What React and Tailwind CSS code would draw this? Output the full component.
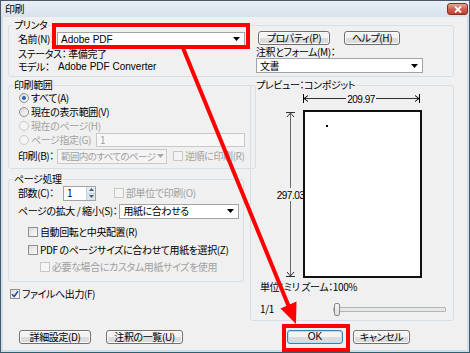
import React from 'react';

// small win7-ish controls
function Btn({ className = '', children, def }) {
  return (
    <div
      className={`h-[14px] flex items-center justify-center rounded-[3px] border bg-linear-to-b from-[#f3f3f3] from-50% to-[#dcdcdc] to-50% ${
        def ? 'border-[#3c7fb1] shadow-[inset_0_0_0_1px_#a8e2fb]' : 'border-[#707070] shadow-[inset_0_0_0_1px_#fbfbfb]'
      } ${className}`}
    >
      {children}
    </div>
  );
}

function Select({ className = '', children, disabled }) {
  return (
    <div
      className={`h-[15px] shrink-0 flex items-center border pl-[3px] pr-[4px] ${
        disabled ? 'border-[#c9c9c9] bg-[#f4f4f4] text-[#a0a0a0]' : 'border-[#a3a3a3] bg-white text-black'
      } ${className}`}
    >
      <span className="flex-1 leading-[12px]">{children}</span>
      <svg width="7" height="4" viewBox="0 0 7 4" className="shrink-0 ml-[2px]">
        <path d="M0 0 H7 L3.5 4 Z" fill={disabled ? '#a8a8a8' : '#000'} />
      </svg>
    </div>
  );
}

function Check({ checked, disabled }) {
  return (
    <span
      className={`w-[10px] h-[10px] shrink-0 border flex items-center justify-center ${
        disabled ? 'border-[#c8c8c8] bg-[#f4f4f4]' : 'border-[#8e8f8f] bg-linear-to-br from-[#dcdcdc] to-[#fcfcfc]'
      }`}
    >
      {checked && (
        <svg width="8" height="8" viewBox="0 0 8 8">
          <path d="M1 4.2 L3.2 6.5 L7 1.2" stroke="#2b4f9e" strokeWidth="1.6" fill="none" />
        </svg>
      )}
    </span>
  );
}

function Radio({ checked, disabled }) {
  return (
    <span
      className={`w-[10px] h-[10px] shrink-0 rounded-full border flex items-center justify-center ${
        disabled ? 'border-[#cacaca] bg-[#f4f4f4]' : 'border-[#8e8f8f] bg-linear-to-br from-[#d8d8d8] to-[#fcfcfc]'
      }`}
    >
      {checked && <span className="w-[4px] h-[4px] rounded-full bg-[#2463b8]" />}
    </span>
  );
}

export default function App() {
  return (
    <div className="relative w-[470px] h-[353px] overflow-hidden whitespace-nowrap font-['Noto_Sans_CJK_JP',sans-serif] [font-feature-settings:'palt'] text-[10px] tracking-[-0.4px] leading-none text-black">
      <div className="w-full h-full border border-[#4b5866] border-b-[#2d5f6e] bg-[#cfdeec] flex flex-col">
        {/* Title bar */}
        <div className="h-[16px] shrink-0 flex items-center justify-between pl-[4px] pr-[1px] bg-linear-to-b from-[#e8eef5] to-[#d8e2ed]">
          <span>印刷</span>
          <div className="w-[21px] h-[12px] rounded-[3px] border border-[#7d2f28] bg-linear-to-b from-[#e8a393] via-[#d0604e] to-[#c0412f] flex items-center justify-center">
            <svg width="8" height="7" viewBox="0 0 8 7">
              <path d="M1 0.5 L7 6.5 M7 0.5 L1 6.5" stroke="#fff" strokeWidth="1.8" />
            </svg>
          </div>
        </div>

        {/* Body */}
        <div className="mx-[2px] h-[333px] bg-[#f0f0f0] pl-[5px] pr-[13px]">
          {/* Printer */}
          <fieldset className="mt-[2px] w-[446px] border border-[#d5dfe5] rounded-[3px]">
            <legend className="ml-[4px] px-[1px] leading-[12px]">プリンタ</legend>
            <div className="flex pb-[2px]">
              <div className="pl-[9px] w-[236px]">
                <div className="h-[16px] flex items-center">
                  <span className="min-w-[39px] pr-[1px]">名前(N)：</span>
                  <Select className="flex-1">
                    <span className="font-['Liberation_Sans',sans-serif] tracking-normal">Adobe PDF</span>
                  </Select>
                </div>
                <div className="h-[13px] flex items-center">
                  <span className="min-w-[40px] pr-[2px]">ステータス：</span>
                  <span>準備完了</span>
                </div>
                <div className="h-[14px] flex items-center">
                  <span className="min-w-[40px] pr-[2px]">モデル：</span>
                  <span className="font-['Liberation_Sans',sans-serif] tracking-normal">Adobe PDF Converter</span>
                </div>
              </div>
              <div className="ml-[11px]">
                <div className="h-[14px] flex items-center">
                  <Btn className="ml-[2px] w-[72px] h-[13px]">プロパティ(P)</Btn>
                  <Btn className="ml-[14px] w-[56px] h-[13px]">ヘルプ(H)</Btn>
                </div>
                <div className="h-[13px] flex items-center">注釈とフォーム(M)：</div>
                <Select className="w-[167px] h-[14px]">文書</Select>
              </div>
            </div>
          </fieldset>

          <div className="mt-[2px] flex items-start gap-[6px]">
            {/* Left column */}
            <div className="w-[236px]">
              <fieldset className="border border-[#d5dfe5] rounded-[3px]">
                <legend className="ml-[4px] px-[1px] leading-[12px]">印刷範囲</legend>
                <div className="pl-[10px] pr-[10px] pb-[5px]">
                  <div className="h-[14px] flex items-center gap-[2px]">
                    <Radio checked />
                    <span>すべて(A)</span>
                  </div>
                  <div className="h-[14px] flex items-center gap-[2px]">
                    <Radio />
                    <span>現在の表示範囲(V)</span>
                  </div>
                  <div className="h-[14px] flex items-center gap-[2px] text-[#a0a0a0]">
                    <Radio disabled />
                    <span>現在のページ(H)</span>
                  </div>
                  <div className="h-[14px] flex items-center text-[#a0a0a0]">
                    <Radio disabled />
                    <span className="ml-[2px] min-w-[65px] pr-[2px]">ページ指定(G)</span>
                    <div className="flex-1 h-[14px] border border-[#c9c9c9] bg-[#f7f7f7] flex items-center pl-[3px]">1</div>
                  </div>
                  <div className="mt-[2px] -ml-[1px] h-[14px] flex items-center">
                    <span className="min-w-[39px] pr-[1px]">印刷(B)：</span>
                    <Select disabled className="w-[110px] h-[14px] pl-[2px] pr-[3px] text-[9.5px] tracking-[-0.6px]">範囲内のすべてのページ</Select>
                    <span className="ml-[6px] flex items-center gap-[2px] text-[#a0a0a0]">
                      <Check disabled />
                      <span>逆順に印刷(R)</span>
                    </span>
                  </div>
                </div>
              </fieldset>

              <fieldset className="mt-[4px] border border-[#d5dfe5] rounded-[3px]">
                <legend className="ml-[4px] px-[1px] leading-[12px]">ページ処理</legend>
                <div className="pl-[9px] pb-[7px]">
                  <div className="h-[16px] flex items-center">
                    <span className="min-w-[45px] pr-[2px]">部数(C)：</span>
                    <div className="w-[33px] h-[15px] border border-[#a3a3a3] bg-white flex items-center">
                      <span className="flex-1 pl-[3px]">1</span>
                      <div className="w-[9px] h-full flex flex-col border-l border-[#c5d3e0]">
                        <div className="flex-1 bg-[#e3ecf5] border-b border-[#c5d3e0] flex items-center justify-center">
                          <svg width="5" height="3" viewBox="0 0 5 3"><path d="M0 3 H5 L2.5 0 Z" fill="#4a5a6a" /></svg>
                        </div>
                        <div className="flex-1 bg-[#dbe6f1] flex items-center justify-center">
                          <svg width="5" height="3" viewBox="0 0 5 3"><path d="M0 0 H5 L2.5 3 Z" fill="#4a5a6a" /></svg>
                        </div>
                      </div>
                    </div>
                    <span className="ml-[18px] flex items-center gap-[2px] text-[#a0a0a0]">
                      <Check disabled />
                      <span>部単位で印刷(O)</span>
                    </span>
                  </div>
                  <div className="mt-[2px] h-[16px] flex items-center">
                    <span className="min-w-[95px] pr-[2px]">ページの拡大 / 縮小(S)：</span>
                    <Select className="w-[120px]">用紙に合わせる</Select>
                  </div>
                  <div className="mt-[5px] pl-[10px] h-[16px] flex items-center gap-[2px]">
                    <Check />
                    <span>自動回転と中央配置(R)</span>
                  </div>
                  <div className="mt-[2px] pl-[10px] h-[16px] flex items-center gap-[2px]">
                    <Check />
                    <span>PDF のページサイズに合わせて用紙を選択(Z)</span>
                  </div>
                  <div className="mt-[2px] pl-[22px] h-[14px] flex items-center gap-[2px] text-[#a0a0a0]">
                    <Check disabled />
                    <span>必要な場合にカスタム用紙サイズを使用</span>
                  </div>
                </div>
              </fieldset>

              <div className="mt-[5px] pl-[2px] h-[14px] flex items-center gap-[2px]">
                <Check checked />
                <span>ファイルへ出力(F)</span>
              </div>
            </div>

            {/* Right column: preview */}
            <fieldset className="w-[204px] border border-[#d5dfe5] rounded-[3px]">
              <legend className="ml-[4px] px-[1px] leading-[12px]">プレビュー：コンポジット</legend>
              <div className="pb-[4px]">
                <svg width="202" height="190" viewBox="0 0 202 190" className="block">
                  {/* width */}
                  <line x1="52" y1="7.5" x2="169" y2="7.5" stroke="#303030" />
                  <line x1="52.5" y1="3" x2="52.5" y2="12" stroke="#000" />
                  <line x1="168.5" y1="3" x2="168.5" y2="12" stroke="#000" />
                  <polyline points="57,4.5 53,7.5 57,10.5" fill="none" stroke="#000" />
                  <polyline points="164,4.5 168,7.5 164,10.5" fill="none" stroke="#000" />
                  <rect x="95" y="1" width="30" height="13" fill="#f0f0f0" />
                  <text x="110" y="8" fontSize="10" textAnchor="middle" dominantBaseline="central" fontFamily="'Liberation Sans', sans-serif" letterSpacing="-0.5">209.97</text>
                  {/* height */}
                  <line x1="39.5" y1="21" x2="39.5" y2="185" stroke="#6a6a6a" />
                  <line x1="35" y1="21.5" x2="44" y2="21.5" stroke="#303030" />
                  <polyline points="36,26 39.5,22 43,26" fill="none" stroke="#303030" />
                  <line x1="35" y1="185.5" x2="44" y2="185.5" stroke="#303030" />
                  <polyline points="36,181 39.5,185 43,181" fill="none" stroke="#303030" />
                  <rect x="27" y="97" width="25" height="13" fill="#f0f0f0" />
                  <text x="39.5" y="104" fontSize="10" textAnchor="middle" dominantBaseline="central" fontFamily="'Liberation Sans', sans-serif" letterSpacing="-0.5">297.03</text>
                  {/* page */}
                  <rect x="53" y="20" width="117" height="166" fill="#fff" stroke="#111" strokeWidth="2" />
                  <rect x="75" y="34" width="2" height="2" fill="#000" />
                </svg>
                <div className="pl-[9px] h-[12px] flex items-center">単位：ミリ ズーム：100%</div>
                <div className="mt-[9px] pl-[9px] h-[14px] flex items-center">
                  <span className="w-[73px]">1/1</span>
                  <div className="relative w-[113px] h-[5px] border border-[#b4b4b4] bg-[#e6e9ea] rounded-[1px]">
                    <div className="absolute -top-[5px] left-0 w-[6px] h-[13px] rounded-[2px] border border-[#8a8a8a] bg-linear-to-b from-[#f6f6f6] to-[#dedede]" />
                  </div>
                </div>
              </div>
            </fieldset>
          </div>

          {/* Bottom buttons */}
          <div className="mt-[9px] flex h-[13px]">
            <Btn className="ml-[11px] w-[72px]">詳細設定(D)</Btn>
            <Btn className="ml-[15px] w-[77px]">注釈の一覧(U)</Btn>
            <Btn def className="ml-[104px] w-[56px] font-['Liberation_Sans',sans-serif] tracking-normal">OK</Btn>
            <Btn className="ml-[10px] w-[57px]">キャンセル</Btn>
          </div>
        </div>
      </div>

      {/* Red annotation overlay */}
      <svg className="absolute inset-0 pointer-events-none" width="470" height="353" viewBox="0 0 470 353">
        <rect x="54" y="25" width="194" height="22" fill="none" stroke="#ff0000" strokeWidth="4" />
        <rect x="284" y="326" width="64" height="24" fill="none" stroke="#ff0000" strokeWidth="4" />
        <line x1="183" y1="48" x2="288.4" y2="305.5" stroke="#ff0000" strokeWidth="4" />
        <polygon points="296,324 296.5,301.5 280.5,308.5" fill="#ff0000" />
      </svg>
    </div>
  );
}
